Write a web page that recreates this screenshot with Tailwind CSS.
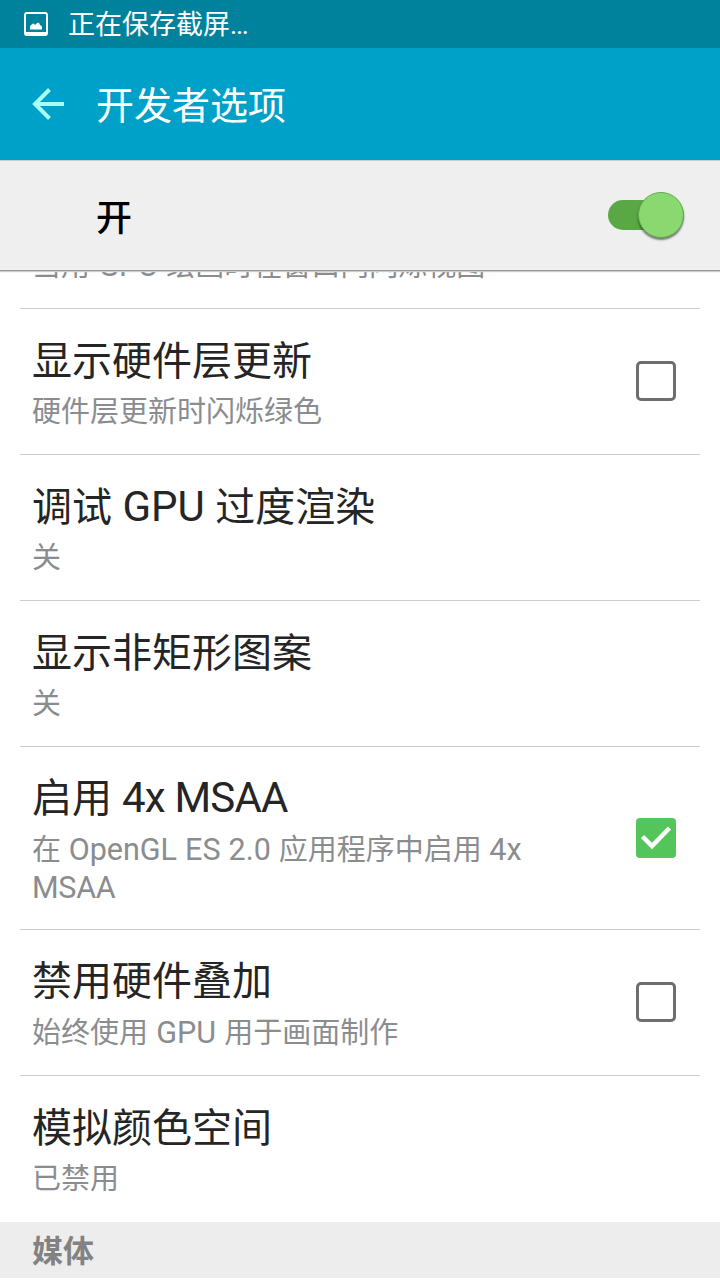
<!DOCTYPE html>
<html lang="zh-CN">
<head>
    <meta charset="UTF-8">
    <meta name="viewport" content="width=device-width, initial-scale=1.0">
    <title>开发者选项</title>
    <script src="https://cdn.jsdelivr.net/npm/@tailwindcss/browser@4"></script>
</head>
<body class="w-[720px] h-[1280px] overflow-hidden bg-white font-['Roboto','Noto_Sans_CJK_SC',sans-serif]">
    <div class="flex flex-col h-full">
        <!-- status bar -->
        <div class="h-12 shrink-0 bg-[#00829d] flex items-center pl-6 text-white">
            <svg class="w-6 h-6" viewBox="0 0 24 24" fill="none">
                <rect x="1" y="1" width="22" height="22" rx="2" stroke="#fff" stroke-width="2"/>
                <path d="M1 20h22v2a2 2 0 0 1-2 2H3a2 2 0 0 1-2-2z" fill="#fff"/>
                <path d="M6 17.500v-3q0-1 3-3 1-.5 2 1.500 2-2.500 3-2.500 1.500 0 2 2.500 2 1 2 2v2.500z" fill="#fff"/>
            </svg>
            <span class="ml-5 pt-px text-[27px] leading-[46px]">正在保存截屏<span class="tracking-[-1.2px]">...</span></span>
        </div>

        <!-- action bar -->
        <header class="h-28 shrink-0 bg-[#00a1c9] flex items-center pl-8 text-white">
            <svg class="w-8 h-8" viewBox="0 0 32 32" fill="none" stroke="#a7fff5" stroke-width="4">
                <path d="M32 16H3M17.500 1.500L3 16l14.500 14.500"/>
            </svg>
            <h1 class="ml-8 pt-1 text-[38px] leading-[56px]">开发者选项</h1>
        </header>

        <!-- master switch -->
        <div class="relative z-10 h-[110px] shrink-0 bg-[#efefef] border-t border-[#c9cccd] flex items-center justify-between pl-24 pr-9 shadow-[0_1px_0_#999,0_2px_1px_#ccc]">
            <span class="pt-1.5 text-[36px] leading-[48px] font-medium text-black">开</span>
            <div class="w-[76px] h-[30px] mb-0.5 rounded-full bg-[#59a845] flex items-center justify-end">
                <div class="w-[46px] h-[46px] rounded-full bg-[#8bd870] border border-[#5fae4b] shadow-[0_2px_2px_rgba(0,0,0,0.5)]"></div>
            </div>
        </div>

        <!-- options -->
        <ul class="mx-5 text-[#252525]">
            <li class="h-[39px] border-b border-[#cdcdcd] px-3 flex flex-col justify-end pb-[23px]">
                <p class="text-[29px] leading-[37px] [word-spacing:1px] text-[#8a8d8f] whitespace-nowrap">当用 <span class="text-[30.500px]">GPU</span> 绘画时在窗口内闪烁视图</p>
            </li>
            <li class="h-[146px] border-b border-[#cdcdcd] px-3 flex items-center justify-between">
                <div class="pt-1">
                    <h2 class="text-[40px] leading-[49px]">显示硬件层更新</h2>
                    <p class="text-[29px] leading-[37px] mt-2 text-[#8a8d8f]">硬件层更新时闪烁绿色</p>
                </div>
                <div class="w-10 h-10 mr-3 mb-0.5 rounded-[5px] border-3 border-[#6e6e6e]"></div>
            </li>
            <li class="h-[146px] border-b border-[#cdcdcd] px-3 flex items-center">
                <div class="pt-1">
                    <h2 class="text-[40px] leading-[49px] [word-spacing:0.5px]">调试 <span class="text-[42px]">GPU</span> 过度渲染</h2>
                    <p class="text-[29px] leading-[37px] mt-2 text-[#8a8d8f]">关</p>
                </div>
            </li>
            <li class="h-[146px] border-b border-[#cdcdcd] px-3 flex items-center">
                <div class="pt-1">
                    <h2 class="text-[40px] leading-[49px]">显示非矩形图案</h2>
                    <p class="text-[29px] leading-[37px] mt-2 text-[#8a8d8f]">关</p>
                </div>
            </li>
            <li class="h-[183px] border-b border-[#cdcdcd] px-3 flex items-center justify-between">
                <div class="w-[520px] pt-1">
                    <h2 class="text-[40px] leading-[49px]">启用 <span class="text-[42px] tracking-[-0.8px]">4x MSAA</span></h2>
                    <p class="text-[29px] leading-[37px] mt-2 [word-spacing:0.5px] text-[#8a8d8f]">在 <span class="text-[30.500px]">OpenGL ES 2.0</span> 应用程序中启用 <span class="text-[30.500px]">4x<br><span class="tracking-[-0.3px]">MSAA</span></span></p>
                </div>
                <div class="w-10 h-10 mr-3 rounded-[4px] bg-[#54c55b]">
                    <svg viewBox="0 0 40 40" fill="none" stroke="#fff" stroke-width="4.500">
                        <path d="M6.500 18.500l9.500 9.500L33.500 10"/>
                    </svg>
                </div>
            </li>
            <li class="h-[146px] border-b border-[#cdcdcd] px-3 flex items-center justify-between">
                <div class="pt-1">
                    <h2 class="text-[40px] leading-[49px]">禁用硬件叠加</h2>
                    <p class="text-[29px] leading-[37px] mt-2 [word-spacing:1px] text-[#8a8d8f]">始终使用 <span class="text-[30.500px]">GPU</span> 用于画面制作</p>
                </div>
                <div class="w-10 h-10 mr-3 mb-0.5 rounded-[5px] border-3 border-[#6e6e6e]"></div>
            </li>
            <li class="h-[146px] px-3 flex items-center">
                <div class="pt-1">
                    <h2 class="text-[40px] leading-[49px]">模拟颜色空间</h2>
                    <p class="text-[29px] leading-[37px] mt-2 text-[#8a8d8f]">已禁用</p>
                </div>
            </li>
        </ul>

        <!-- section header -->
        <div class="h-14 shrink-0 bg-[#ededed] flex items-center pt-1 px-8 text-[31px] leading-[40px] font-bold text-[#828282]">媒体</div>
    </div>
</body>
</html>
